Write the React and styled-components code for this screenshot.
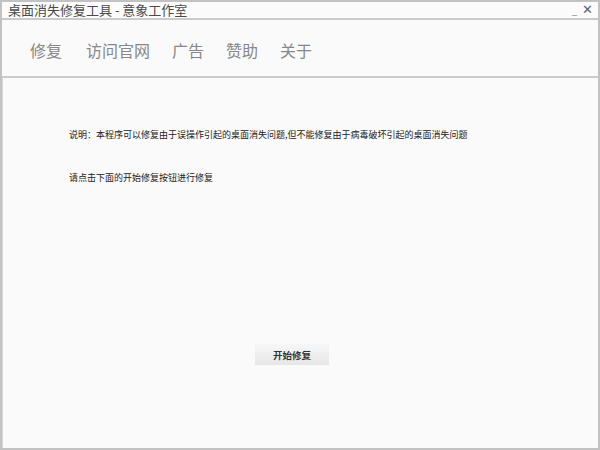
import React from 'react'
import styled, { createGlobalStyle } from 'styled-components'

const Global = createGlobalStyle`
  html, body { margin: 0; padding: 0; background: #fafafa; }
  * { box-sizing: border-box; }
`

const Window = styled.div`
  width: 600px;
  height: 450px;
  border: 2px solid #c2c2c2;
  background: #fafafa;
  display: flex;
  flex-direction: column;
  font-family: "Noto Sans CJK SC", "Liberation Sans", sans-serif;
`

const TitleBar = styled.div`
  height: 18px;
  display: flex;
  align-items: center;
  padding: 0 5px 0 6px;
  border-bottom: 2px solid #cbcbcb;
  background: #fbfbfb;
`

const Title = styled.div`
  flex: 1;
  font-size: 13px;
  line-height: 16px;
  color: #4a4a4a;
`

const WinButton = styled.span`
  font-size: ${p => p.size || 12}px;
  font-weight: ${p => (p.bold ? 'bold' : 'normal')};
  color: ${p => p.color || '#888'};
  margin-left: ${p => p.gap || 0}px;
  line-height: 14px;
  font-family: "DejaVu Sans", sans-serif;
`

const Nav = styled.nav`
  height: 58px;
  display: flex;
  align-items: center;
  gap: 22px;
  padding: 3px 0 0 28px;
  border-bottom: 2px solid #cbcbcb;
`

const NavItem = styled.a`
  font-size: 16px;
  color: #888;
  cursor: pointer;
  &:first-child { margin-right: 2px; }
`

const Content = styled.div`
  flex: 1;
  display: flex;
  flex-direction: column;
  padding: 0 0 0 66px;
  border-left: 1px solid #d8d8d8;
`

const Para = styled.p`
  margin: ${p => p.top}px 0 0;
  font-size: 9px;
  line-height: 12px;
  color: #222;
`

const Button = styled.button`
  align-self: flex-start;
  margin: 160px 0 0 186px;
  width: 74px;
  height: 21px;
  border: none;
  background: linear-gradient(#f7f7f7, #e6e6e6);
  font-family: inherit;
  font-size: 9.5px;
  font-weight: bold;
  color: #333;
  padding: 0;
`

export default function App() {
  return (
    <>
      <Global />
      <Window>
        <TitleBar>
          <Title>桌面消失修复工具 - 意象工作室</Title>
          <WinButton size={10} color="#999">_</WinButton>
          <WinButton size={13} gap={5} bold color="#5a6270">✕</WinButton>
        </TitleBar>
        <Nav>
          <NavItem>修复</NavItem>
          <NavItem>访问官网</NavItem>
          <NavItem>广告</NavItem>
          <NavItem>赞助</NavItem>
          <NavItem>关于</NavItem>
        </Nav>
        <Content>
          <Para top={51}>说明：本程序可以修复由于误操作引起的桌面消失问题,但不能修复由于病毒破坏引起的桌面消失问题</Para>
          <Para top={31}>请点击下面的开始修复按钮进行修复</Para>
          <Button>开始修复</Button>
        </Content>
      </Window>
    </>
  )
}
